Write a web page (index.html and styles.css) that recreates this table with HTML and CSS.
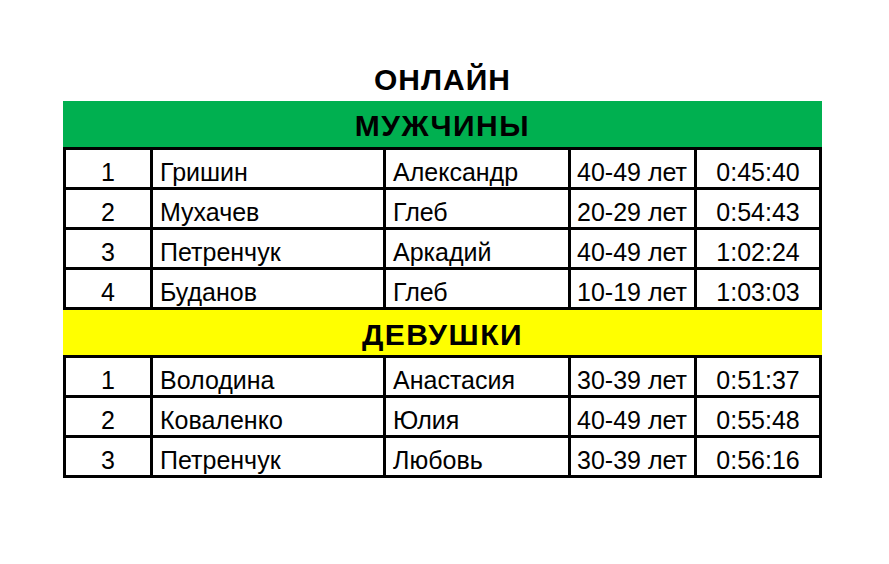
FILE: index.html
```html
<!DOCTYPE html>
<html lang="ru">
<head>
<meta charset="utf-8">
<title>Онлайн</title>
<link rel="stylesheet" href="styles.css">
</head>
<body>
<main class="sheet">
  <h1 class="title">ОНЛАЙН</h1>

  <section class="group">
    <h2 class="group-head group-head--men">МУЖЧИНЫ</h2>
    <div class="rows">
      <div class="cell num">1</div><div class="cell">Гришин</div><div class="cell">Александр</div><div class="cell age">40-49 лет</div><div class="cell time">0:45:40</div>
      <div class="cell num">2</div><div class="cell">Мухачев</div><div class="cell">Глеб</div><div class="cell age">20-29 лет</div><div class="cell time">0:54:43</div>
      <div class="cell num">3</div><div class="cell">Петренчук</div><div class="cell">Аркадий</div><div class="cell age">40-49 лет</div><div class="cell time">1:02:24</div>
      <div class="cell num">4</div><div class="cell">Буданов</div><div class="cell">Глеб</div><div class="cell age">10-19 лет</div><div class="cell time">1:03:03</div>
    </div>
  </section>

  <section class="group">
    <h2 class="group-head group-head--women">ДЕВУШКИ</h2>
    <div class="rows">
      <div class="cell num">1</div><div class="cell">Володина</div><div class="cell">Анастасия</div><div class="cell age">30-39 лет</div><div class="cell time">0:51:37</div>
      <div class="cell num">2</div><div class="cell">Коваленко</div><div class="cell">Юлия</div><div class="cell age">40-49 лет</div><div class="cell time">0:55:48</div>
      <div class="cell num">3</div><div class="cell">Петренчук</div><div class="cell">Любовь</div><div class="cell age">30-39 лет</div><div class="cell time">0:56:16</div>
    </div>
  </section>
</main>
</body>
</html>
```

FILE: styles.css
```css
html, body {
  margin: 0;
  padding: 0;
  background: #ffffff;
}

body {
  font-family: "Liberation Sans", Arial, sans-serif;
  color: #000000;
}

.sheet {
  width: 759px;
  margin-left: 63px;
  padding-top: 59px;
}

.title {
  margin: 0 0 1px;
  height: 41px;
  line-height: 41px;
  font-size: 30px;
  font-weight: bold;
  letter-spacing: 1px;
  text-align: center;
}

.group-head {
  margin: 0;
  box-sizing: border-box;
  padding-top: 3px;
  font-size: 30px;
  font-weight: bold;
  letter-spacing: 1.5px;
  text-align: center;
}

.group-head--men {
  height: 46px;
  line-height: 43px;
  background: #00b050;
}

.group-head--women {
  height: 45px;
  padding-top: 4px;
  line-height: 41px;
  background: #ffff00;
}

.rows {
  display: grid;
  grid-template-columns: 84px 230px 182px 123px 122px;
  grid-auto-rows: 37px;
  gap: 3px;
  padding: 3px;
  background: #000000;
}

.cell {
  box-sizing: border-box;
  background: #ffffff;
  padding: 4px 0 0 7px;
  font-size: 25px;
  line-height: 37px;
  white-space: nowrap;
  overflow: hidden;
}

.cell.num,
.cell.time {
  padding-left: 0;
  text-align: center;
}

.cell.age {
  padding-left: 6px;
}
```
